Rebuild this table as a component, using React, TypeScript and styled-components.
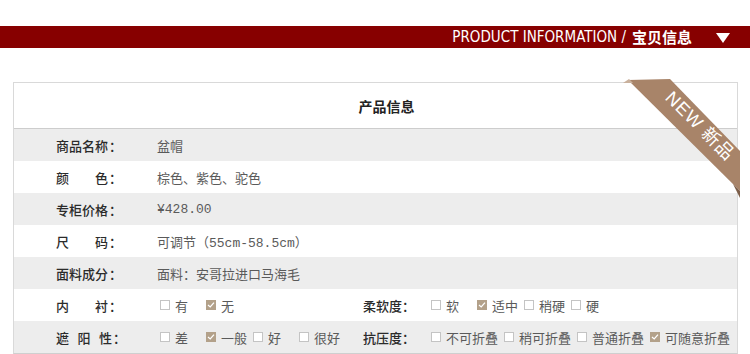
import styled, { createGlobalStyle } from 'styled-components'

const GlobalStyle = createGlobalStyle`
    body {
        margin: 0;
        background: #ffffff;
        font-family: 'Noto Sans CJK SC', 'Liberation Sans', sans-serif;
    }
`

const Page = styled.div`
    padding-top: 26px;
    width: 750px;
`

const Bar = styled.div`
    display: flex;
    align-items: center;
    justify-content: flex-end;
    height: 22px;
    padding-right: 20px;
    background-color: #870000;
    color: #ffffff;
`

const BarLatin = styled.span`
    font-family: 'Liberation Sans Narrow', 'DejaVu Sans Condensed', 'Liberation Sans', sans-serif;
    font-size: 15px;
    line-height: 22px;
`

const BarCjk = styled.span`
    font-family: 'Noto Sans CJK SC', sans-serif;
    font-weight: bold;
    font-size: 15px;
    line-height: 22px;
    margin-left: 6px;
`

const Arrow = styled.span`
    width: 0;
    height: 0;
    margin-left: 24px;
    margin-top: 1px;
    border-left: 7px solid transparent;
    border-right: 7px solid transparent;
    border-top: 10px solid #ffffff;
`

const Table = styled.div`
    position: relative;
    margin: 34px 12px 0 13px;
    border: 1px solid #d9d9d9;
    border-bottom-color: #cfcfcf;
`

const Heading = styled.div`
    display: flex;
    align-items: center;
    justify-content: center;
    height: 45px;
    padding-left: 22px;
    border-bottom: 1px solid #cdcdcd;
    font-size: 14px;
    font-weight: bold;
    color: #222222;
`

const Row = styled.div<{ $shade: boolean }>`
    display: grid;
    grid-template-columns: 101px 206px 65px 1fr;
    align-items: center;
    height: 32px;
    padding-left: 42px;
    background-color: ${(p) => (p.$shade ? '#ededed' : '#ffffff')};
`

const Label = styled.div`
    display: flex;
    align-items: center;
    white-space: nowrap;
    font-size: 13px;
    font-weight: 500;
    color: #2b2b2b;
`

const LabelText = styled.span<{ $width: number }>`
    display: flex;
    justify-content: space-between;
    width: ${(p) => p.$width}px;
`

const Colon = styled.span`
    margin-left: 1px;
`

const Value = styled.div<{ $wide?: boolean }>`
    grid-column: ${(p) => (p.$wide ? '2 / -1' : 'auto')};
    font-family: 'Liberation Mono', 'Noto Sans CJK SC', monospace;
    font-size: 13px;
    color: #5a5a5a;
`

const Options = styled.div`
    display: flex;
    align-items: center;
    gap: 6px;
    padding-left: 3px;
`

const Option = styled.span`
    display: flex;
    align-items: center;
    gap: 5px;
    min-width: 40px;
    font-size: 13px;
    color: #5a5a5a;
`

const Box = styled.span<{ $checked: boolean }>`
    display: inline-flex;
    align-items: center;
    justify-content: center;
    box-sizing: border-box;
    width: 10px;
    height: 10px;
    border: 1px solid ${(p) => (p.$checked ? '#b3a18a' : '#c4c4c4')};
    background-color: ${(p) => (p.$checked ? '#b3a18a' : '#ffffff')};
`

const Ribbon = styled.svg`
    position: absolute;
    top: -6px;
    right: -5px;
    pointer-events: none;
`

type Choice = { text: string; checked?: boolean }

const Check = ({ checked }: { checked: boolean }) => (
    <Box $checked={checked}>
        {checked && (
            <svg width='8' height='8' viewBox='0 0 8 8'>
                <path d='M1 4 L3.2 6 L7 1.6' fill='none' stroke='#ffffff' strokeWidth='1.2' />
            </svg>
        )}
    </Box>
)

const Choices = ({ items }: { items: Choice[] }) => (
    <Options>
        {items.map((c) => (
            <Option key={c.text}>
                <Check checked={!!c.checked} />
                {c.text}
            </Option>
        ))}
    </Options>
)

// characters spread over the width of a four-character label
const Field = ({ label, width = 52 }: { label: string; width?: number }) => (
    <Label>
        <LabelText $width={width}>
            {label.split('').map((ch, i) => (
                <span key={i}>{ch}</span>
            ))}
        </LabelText>
        <Colon>：</Colon>
    </Label>
)

const rows = [
    { label: '商品名称', value: '盆帽' },
    { label: '颜色', value: '棕色、紫色、驼色' },
    { label: '专柜价格', value: '¥428.00' },
    { label: '尺码', value: '可调节（55cm-58.5cm）' },
    { label: '面料成分', value: '面料：安哥拉进口马海毛' },
]

export default function App() {
    return (
        <>
            <GlobalStyle />
            <Page>
                <Bar>
                    <BarLatin>PRODUCT INFORMATION /</BarLatin>
                    <BarCjk>宝贝信息</BarCjk>
                    <Arrow />
                </Bar>

                <Table>
                    <Heading>产品信息</Heading>
                    {rows.map((r, i) => (
                        <Row key={r.label} $shade={i % 2 === 0}>
                            <Field label={r.label} />
                            <Value $wide>{r.value}</Value>
                        </Row>
                    ))}
                    <Row $shade={false}>
                        <Field label='内衬' />
                        <Choices items={[{ text: '有' }, { text: '无', checked: true }]} />
                        <Label>柔软度：</Label>
                        <Choices
                            items={[
                                { text: '软' },
                                { text: '适中', checked: true },
                                { text: '稍硬' },
                                { text: '硬' },
                            ]}
                        />
                    </Row>
                    <Row $shade>
                        <Field label='遮阳性' width={56} />
                        <Choices
                            items={[
                                { text: '差' },
                                { text: '一般', checked: true },
                                { text: '好' },
                                { text: '很好' },
                            ]}
                        />
                        <Label>抗压度：</Label>
                        <Choices
                            items={[
                                { text: '不可折叠' },
                                { text: '稍可折叠' },
                                { text: '普通折叠' },
                                { text: '可随意折叠', checked: true },
                            ]}
                        />
                    </Row>

                    <Ribbon width='130' height='124' viewBox='0 0 130 124'>
                        <polygon points='16,3 58,2 128,74 128,114' fill='#a88469' />
                        <polygon points='11,6 17,2 21,6' fill='#c9b19d' />
                        <polygon points='121,107 128,114 128,121' fill='#7d5f4a' />
                        <text
                            x='88'
                            y='49'
                            transform='rotate(45 88 49)'
                            textAnchor='middle'
                            dominantBaseline='central'
                            fill='#ffffff'
                            fontSize='18'
                            fontFamily="'Liberation Sans', 'Noto Sans CJK SC', sans-serif"
                            letterSpacing='1'
                        >
                            NEW 新品
                        </text>
                    </Ribbon>
                </Table>
            </Page>
        </>
    )
}
